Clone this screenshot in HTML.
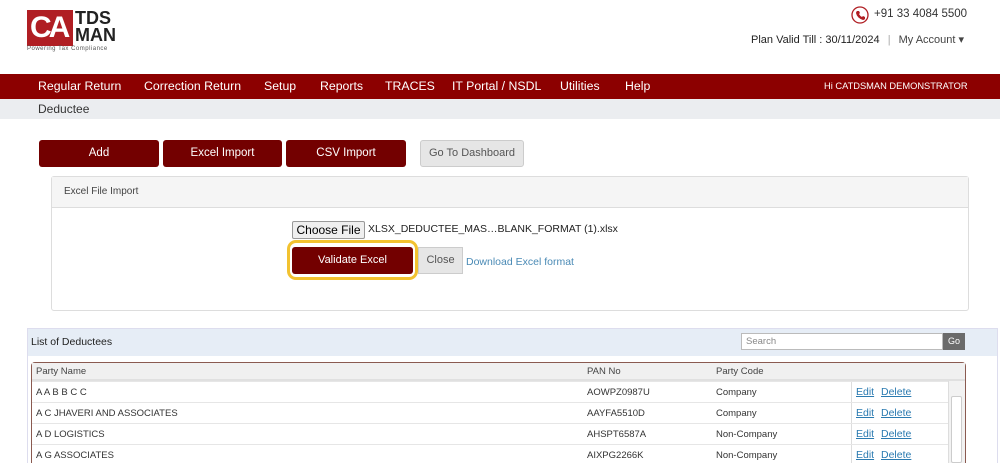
<!DOCTYPE html>
<html style="width:1000px;height:463px;overflow:hidden"><head><meta charset="utf-8"><style>
*{box-sizing:border-box;margin:0;padding:0}
html,body{width:1000px;height:463px;overflow:hidden}
body{background:#fff;font-family:"Liberation Sans",sans-serif;position:relative;color:#333}
.a{position:absolute}
.nav{left:0;top:74px;width:1000px;height:25px;background:#8c0000;color:#fff;font-size:12.3px}
.nav span{position:absolute;top:5px}
.btn{position:absolute;top:140px;height:27px;background:#730000;color:#fff;font-size:11.5px;text-align:center;line-height:27px;border-radius:3px}
.row{position:absolute;left:32px;width:916px;height:21px;font-size:9.5px;border-top:1px solid #e6e6e6}
.row span{position:absolute;top:5px}
.lk{color:#2a7ab0;text-decoration:underline;font-size:10.5px}
</style></head><body>
<div class="a" style="left:27px;top:10px;width:46px;height:36px;background:#b01e23"></div>
<div class="a" style="left:30px;top:11px;font-size:30px;font-weight:bold;color:#fff;letter-spacing:-3px">CA</div>
<div class="a" style="left:75px;top:10px;font-size:18px;font-weight:bold;color:#222;line-height:17px">TDS<br>MAN</div>
<div class="a" style="left:27px;top:46px;font-size:6px;color:#555;letter-spacing:.5px">Powering Tax Compliance</div>
<svg class="a" style="left:851px;top:6px" width="18" height="18"><circle cx="9" cy="9" r="8" fill="none" stroke="#b01e23" stroke-width="1.3"/><path d="M6 5l2 0 1 2-1 1q1 2 3 3l1-1 2 1 0 2q-1 1-2 1q-6-2-7-7q0-1 1-2z" fill="#b01e23"/></svg>
<div class="a" style="left:874px;top:8px;font-size:11.5px;color:#333">+91 33 4084 5500</div>
<div class="a" style="left:751px;top:33px;font-size:11px;color:#222;white-space:nowrap">Plan Valid Till : 30/11/2024 <span style="color:#aaa;margin:0 5px">|</span> <span style="color:#444">My Account ▾</span></div>
<div class="a nav"><span style="left:38px">Regular Return</span><span style="left:144px">Correction Return</span><span style="left:264px">Setup</span><span style="left:320px">Reports</span><span style="left:385px">TRACES</span><span style="left:452px">IT Portal / NSDL</span><span style="left:560px">Utilities</span><span style="left:625px">Help</span><span style="left:824px;font-size:9.3px;top:7px">Hi CATDSMAN DEMONSTRATOR</span></div>
<div class="a" style="left:0;top:99px;width:1000px;height:20px;background:#ebedf0;font-size:12px;padding:3px 0 0 38px">Deductee</div>
<div class="btn" style="left:39px;width:120px">Add</div>
<div class="btn" style="left:163px;width:119px">Excel Import</div>
<div class="btn" style="left:286px;width:120px">CSV Import</div>
<div class="btn" style="left:420px;width:104px;top:140px;background:#e6e6e6;color:#555;border:1px solid #ccc;line-height:25px;font-size:11px">Go To Dashboard</div>
<div class="a" style="left:51px;top:176px;width:918px;height:135px;border:1px solid #ddd;border-radius:3px"></div>
<div class="a" style="left:52px;top:177px;width:916px;height:31px;background:#f5f5f5;border-bottom:1px solid #ddd;font-size:10px;padding:9px 0 0 12px;color:#444">Excel File Import</div>
<div class="a" style="left:292px;top:221px;width:73px;height:18px;background:#efefef;border:1px solid #999;border-radius:2px;font-size:12px;text-align:center;line-height:16px;color:#000">Choose File</div>
<div class="a" style="left:368px;top:223px;font-size:10.5px;color:#222;white-space:nowrap">XLSX_DEDUCTEE_MAS…BLANK_FORMAT (1).xlsx</div>
<div class="a" style="left:287px;top:240px;width:131px;height:40px;border:3px solid #f2c230;border-radius:9px"></div>
<div class="a" style="left:292px;top:247px;width:121px;height:27px;background:#730000;color:#fff;font-size:11px;text-align:center;line-height:27px;border-radius:3px">Validate Excel</div>
<div class="a" style="left:418px;top:247px;width:45px;height:27px;background:#e6e6e6;border:1px solid #ccc;color:#555;font-size:11px;text-align:center;line-height:25px">Close</div>
<div class="a" style="left:466px;top:256px;font-size:10.5px;color:#4a8ab5">Download Excel format</div>
<div class="a" style="left:27px;top:328px;width:971px;height:135px;border:1px solid #dde;border-bottom:none"></div>
<div class="a" style="left:28px;top:329px;width:969px;height:27px;background:#e6edf6;font-size:10.5px;padding:7px 0 0 3px;color:#222">List of Deductees</div>
<div class="a" style="left:741px;top:333px;width:202px;height:17px;background:#fff;border:1px solid #bbb;font-size:9.5px;color:#888;padding:2px 4px">Search</div>
<div class="a" style="left:943px;top:333px;width:22px;height:17px;background:#6b6b6b;color:#fff;font-size:9px;text-align:center;line-height:17px">Go</div>
<div class="a" style="left:31px;top:362px;width:935px;height:101px;border:1px solid #8a5a50;border-bottom:none;border-radius:4px 4px 0 0"></div>
<div class="a" style="left:32px;top:363px;width:933px;height:18px;background:#f0f0f0;font-size:9.5px;color:#444;border-bottom:2px solid #e0e0e0"><span class="a" style="left:4px;top:3px">Party Name</span><span class="a" style="left:555px;top:3px">PAN No</span><span class="a" style="left:684px;top:3px">Party Code</span></div>
<div class="a" style="left:851px;top:381px;width:1px;height:82px;background:#ddd"></div>
<div class="a" style="left:948px;top:381px;width:17px;height:82px;background:#f2f2f2;border-left:1px solid #ddd"></div>
<div class="a" style="left:951px;top:396px;width:11px;height:67px;background:#fff;border:1px solid #ccc;border-radius:2px"></div>
<div class="row" style="top:381px"><span style="left:4px">A A B B C C</span><span style="left:555px">AOWPZ0987U</span><span style="left:684px">Company</span><span style="left:824px;top:4px" class="lk">Edit</span><span style="left:849px;top:4px" class="lk">Delete</span></div>
<div class="row" style="top:402px"><span style="left:4px">A C JHAVERI AND ASSOCIATES</span><span style="left:555px">AAYFA5510D</span><span style="left:684px">Company</span><span style="left:824px;top:4px" class="lk">Edit</span><span style="left:849px;top:4px" class="lk">Delete</span></div>
<div class="row" style="top:423px"><span style="left:4px">A D LOGISTICS</span><span style="left:555px">AHSPT6587A</span><span style="left:684px">Non-Company</span><span style="left:824px;top:4px" class="lk">Edit</span><span style="left:849px;top:4px" class="lk">Delete</span></div>
<div class="row" style="top:444px;height:19px"><span style="left:4px">A G ASSOCIATES</span><span style="left:555px">AIXPG2266K</span><span style="left:684px">Non-Company</span><span style="left:824px;top:4px" class="lk">Edit</span><span style="left:849px;top:4px" class="lk">Delete</span></div>
</body></html>
